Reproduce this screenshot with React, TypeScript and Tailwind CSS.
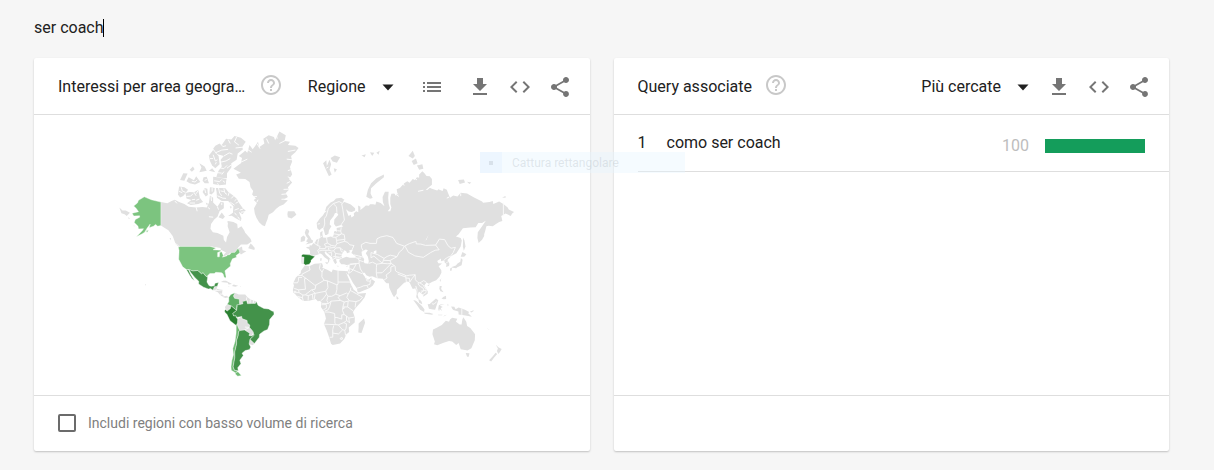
import React from "react";

/* ---------- Map ---------- */

// Coordinates are "lon,lat" pairs, drawn in a Mercator projection.
const SCALE_X = 1.068;
const SCALE_Y = 60.5;
const ORIGIN_X = 277.6;
const ORIGIN_Y = 191;

function toPath(shape: string, closed: boolean): string {
  const points = shape
    .trim()
    .split(/\s+/)
    .map((pair) => {
      const [lon, lat] = pair.split(",").map(Number);
      const merc = Math.log(Math.tan(Math.PI / 4 + (lat * Math.PI) / 360));
      return (ORIGIN_X + lon * SCALE_X).toFixed(1) + " " + (ORIGIN_Y - merc * SCALE_Y).toFixed(1);
    });
  return "M" + points.join("L") + (closed ? "Z" : "");
}

const LAND: string[] = [
  // Eurasia
  "-9.2,43 -8,43.8 -1.8,43.4 -1.2,44.7 -1.2,46 -2.5,47.4 -4.6,48 -4.5,48.6 -1.6,48.7 -1.7,49.7 0.2,49.6 1.6,50.8 3.5,51.4 4.7,53 7,53.5 8.6,53.9 8.2,56 8.3,57 10.6,57.7 10.3,56.3 10.9,54.2 14,54.1 18,54.8 19.8,54.5 21,55.5 21.3,57.4 22.7,57.6 24,57.1 23.7,59.2 28,59.6 30,60 28,60.6 23,59.9 21.3,61 21.5,63 25.3,65 24,65.8 22,65.6 21,64.5 17.5,62.5 17.2,60.8 18.8,60 16.5,58 16,56.2 14.2,55.5 12.9,55.5 11.2,59 10.5,59.3 7.5,58 5.5,59 5,61.5 8,63.5 11,64.8 12.5,66 14,68 18,69.5 21,70 23,70.8 28,71 31,70.4 29.5,69.8 33,69.4 37,68.8 41,67.5 41,66.6 38,66.1 35,66.3 32.5,67.1 34.8,64.5 37,65 37.5,63.9 40,64.6 39.8,65.6 42,66.4 44,66 43.8,68.5 46,68 46,66.8 49,67.8 51,68.5 54,68.4 55,68.9 58,68.9 60,68.7 61,69.8 65,69.3 68.5,68.2 67,69.6 66.8,71.2 69,72.8 72.5,72.8 72,71 72.5,69 73.7,67.5 71.5,66.4 74,66.4 75,67.8 74,69 74,71 75,72.2 78,72.3 79,71.6 80.5,72.4 80,73.5 83,73.8 87,75 90,75.5 92,75.1 95,76 97,75.8 99,76.4 101,76.3 101,77 104,77.7 106,77.3 108,76.7 111,76.6 113,76 113,74.6 110,74 107,73.2 109,73.3 111,73.9 113,73.6 118,73.1 119,73.5 123,73 124,73.7 127,73.3 128,72.5 130,71 133,71.7 137,71.4 140,72.5 146,72.3 150,71.5 153,71 160,69.8 161,69.4 167,69.6 170,70 170.5,69 176,69.8 180,69 184,67.8 185,67 190,66.1 188,65.4 187,64.5 182,65.5 180,65 178,64.5 179,62.4 176,62 173,61 170,60 166,60.2 164,60 163,57.8 162,56 162,55 160,53 156.7,51 155.6,54 156,57 160,60 163.5,62.5 160,61.5 156.5,61.5 154,59.5 149,59.4 142,59 138,56 135.5,54.7 140,54 141,52.5 140,49 136,44.5 132,43 130.7,42.3 127.5,39.8 129.4,37 129,35.2 126.3,34.5 126.6,37 125,37.8 124.6,39.7 121.5,38.8 121.5,40.8 118,39 119,37.3 122.5,37.2 119.3,35 121.8,32 121.9,30 120,26.5 117,23.6 113.5,22.2 110.2,20.5 108,21.6 105.8,19 109.2,13.5 109,11.5 105,8.7 105,10.3 102.5,12 100.8,13.4 99.5,10.5 100.5,7.3 103.3,4 104,1.4 101,2.8 100.3,6 98.3,8 98.7,12 97.6,16.5 95,15.8 94,17.5 92,21.5 90.5,22.5 87,21.3 85,19.5 82,16.6 80.2,15 80,11.5 77.5,8.1 76,10.5 73,17 72.7,20.8 70.5,20.8 69,22.3 67,24.8 61.5,25.2 57,26.9 54.5,26.6 51.5,27.8 50,30 48,30 48,29 50,26.8 51,24.8 51.5,25.9 51.8,24.1 54,24.2 56.2,26 56.7,24.3 59.7,22.5 57.7,19 55,17 52,15.6 45,12.8 43.4,12.8 42.6,16.5 39,21.2 35,28 34.9,29.5 34.5,28 32.6,29.8 32.3,31.2 34.3,31.3 35.8,34 36,36.5 33,36.1 30.6,36.6 28,36.7 26.3,38.5 26.3,40 29,41 33,42 36,41.5 41.5,41.5 41.5,42.5 37.5,44.7 39,47.2 35,46.2 36.5,45.3 33.5,44.5 32.7,45.8 31,46.6 28.7,44 28,42 29,41.2 26,40.7 23,40.4 24,38 22.5,36.6 21,38.5 19.4,41.8 15,44.5 13.6,45.5 12.4,45 13.6,43.5 16,41.9 18.4,40 17,40.5 16.5,38 15.7,38 15.6,40 12.3,41.7 10.3,43.5 8.8,44.4 5,43.3 3.1,43 3.2,42 -0.3,39.5 -0.7,37.7 -2,36.8 -5.5,36.1 -6.5,37 -9,37 -9.4,38.8",
  // Africa
  "-6,35.8 -2,35.1 3,36.9 10,37.3 11,35 10.2,34 15,32.3 19,30.3 20,32.5 25,31.6 32.3,31.3 32.6,29.8 35.5,24 37.3,20 39.5,15.3 43,12.5 43.3,11.5 51.3,12 50,8 47,4 41.5,-2 39,-6 40.7,-11 40.6,-15.5 35,-20 35.5,-24 32.8,-26 31,-29.8 27,-33.6 20,-34.8 18.4,-33.8 17,-29.5 14.5,-23 11.8,-17 13.7,-12 12.2,-6 9,-1 9.5,3.5 8,4.5 6,4.3 4,6.4 -2,4.8 -7.5,4.4 -13,8.5 -15,11 -17,12.5 -17.3,14.8 -16.3,19 -17,21 -14.5,26 -10,29.5 -9.7,31.5",
  // Canadian mainland
  "-141,69.6 -135,69.2 -131,70 -128,70.4 -124,69.6 -119,69 -115,68 -108,67.7 -102,67.9 -98,67.8 -96,69.5 -95,71.7 -92,71 -92,69.5 -88,68 -85,69.7 -82,69.5 -82,67.5 -86,66.5 -88,64.2 -91,63 -94,61 -94.6,58.8 -92.3,57 -88,56.6 -82.5,55.2 -82,52.8 -80,51.3 -79,54.5 -76.6,57 -78.5,60 -78,62.4 -73,62 -69.5,61 -69,58.9 -65.5,60 -63,58 -62,56.8 -57,53.5 -56,52 -60,50.2 -66,50.2 -70,47.2 -65,49 -64.5,46.5 -61,45.8 -66,43.7 -67.5,45.2 -69.2,47.4 -71.5,45 -75,45 -79,43.3 -83,42 -81.5,44 -80,45 -82.5,46 -85,46.8 -85,48 -89,48.5 -95,49 -123,49 -127.5,51 -130,55 -134,58 -137,59 -141,60.3",
  // Greenland
  "-73,78.2 -69,78.8 -66,79.2 -65,80.1 -68,80.4 -62,81.2 -60,80.9 -58,82 -55,81.4 -53,81.8 -50,82.4 -49,81.7 -44,82.2 -45,82.8 -40,83.2 -35,83 -34,82.6 -30,83.6 -24,83.2 -25,82.5 -20,82.4 -22,82 -15,81.9 -12,81.6 -15,81 -19,80.4 -18,79.5 -20,78.5 -18,77 -21,76 -18,75.2 -22,74 -21,73.3 -24,72.4 -22,71.2 -26,70.4 -22,70.2 -26,68.8 -30,68.2 -33,67.3 -36,66 -40,65 -41,63.3 -42.5,61.5 -43.5,60 -46,60.5 -49,61.8 -51.5,63.8 -53,65.5 -53.7,67.5 -51,69.3 -54,70.3 -52,70.8 -55.5,72 -54.5,73 -57,74 -58,75.3 -62,76 -68,76.1 -70.5,77 -66,77.4",
  // Central America
  "-92.2,14.6 -90.9,17.7 -88.3,18.3 -88.8,15.9 -83.3,15 -83.7,11 -81.5,9 -79.5,9.5 -77.3,8 -80.5,7.4 -83,8.4 -85.7,10.5 -87.6,12.9",
  // Venezuela and the Guianas
  "-71.5,12 -70,11.6 -68,10.6 -62,10.7 -60,8.3 -57,6 -51.7,4.2 -52.5,2.2 -56,2.2 -59.5,1.5 -60,5 -64,4 -64,2 -66.3,0.8 -67.4,2.8 -67.5,6.2 -72,7.2 -73,9.2",
  "-78.8,1.4 -75.3,0 -76,-2.8 -79,-5 -80.3,-3.4 -81,-1",
  "-69,-12.5 -65.3,-10 -65,-12 -60.2,-13.8 -60,-16 -57.7,-18 -58,-20 -55.8,-22.3 -54.5,-24 -55.8,-27.4 -58.5,-27 -57.7,-25.2 -62.6,-22.2 -67,-22.8 -68.5,-20 -69.5,-17.5 -69.3,-16",
  "-57.6,-30.2 -53.4,-33.7 -55,-35 -58.3,-34",
  // Australia, Tasmania, New Zealand
  "114,-22 113.5,-26 115.7,-32 115,-34.2 118,-35 124,-33 129,-31.7 132,-32 135.8,-34.8 138,-33.2 140,-38 144,-38.5 146.3,-39 150,-37.3 153.2,-31 153.5,-26 149,-20.5 146,-18.8 145.2,-15 142.5,-10.8 141.5,-13 140.8,-17.5 139,-17.4 135.5,-15 136.8,-12.2 132,-11.3 130,-13 129,-15 126,-14 122.3,-18 117,-20.7",
  "144.7,-40.8 148.2,-40.9 147.5,-43.4 146,-43.4",
  "172.8,-34.5 175.3,-36.5 178.4,-37.8 176.8,-40 175.2,-41.5 174,-39.3 174.8,-37.5",
  "172.7,-40.6 174.2,-41.5 171,-44.3 168.5,-46.6 166.6,-45.8 170,-43",
  // South-east Asian islands
  "95.5,5.6 98,4.8 103.5,0 106,-3.2 105.7,-5.8 102,-3.8 98.8,1",
  "105.3,-6.6 110.8,-6.5 114.4,-7.8 113,-8.5 106.5,-7.5",
  "109,1.5 111,1.6 114,4.6 116.8,7 119,5.2 117.6,1 116,-3.8 114,-3.6 110.2,-2.8",
  "119.5,0.5 121,1.2 125,1.5 120.3,0.2 123.2,-1 121.3,-2 122.5,-4.8 120.3,-3 119.7,-5.5 118.9,-3",
  "131,-0.8 134,-0.9 135.2,-3.2 138,-1.6 144,-3.8 147.8,-6 147,-7 150.5,-10.4 147,-9.5 143,-9 138,-8.3 137.8,-5.3 133,-4 132,-2.8",
  "148.5,-5.6 152,-4.2 152.2,-5 150,-6.2",
  "120.3,18.4 122.2,18.4 121.6,15.8 124,12.8 121,13.6 119.9,16",
  "122,7 124,8.6 126.2,9.4 126.3,6.4 124,6.2",
  "118.5,-8.4 123,-8.4 122.5,-9 119,-9",
  "123.5,-10.3 127,-8.5 125,-9",
  "127.5,2 128.5,1 128,-0.6",
  "120.2,23 121.8,25.2 121,22.2",
  "108.7,19.2 111,20 110,18.4",
  "79.8,9.5 81.8,7.3 81,6 79.9,6.8",
  // Japan and Sakhalin
  "130,33.3 131.8,33.8 131.4,31.4 130.2,31.3",
  "131,34.3 135.5,35.6 137,37.2 139.6,38.6 140.2,41.2 141.8,40 140.8,35.8 136.8,34.2 135.7,33.6 132.5,34",
  "140,42 141.6,45.4 145.3,43.8 143.3,42.1 140.8,42",
  "142.2,54.2 143.4,52.5 144.5,49 142.9,46.2 142,49",
  // Madagascar
  "49.3,-12 50.4,-15.8 47,-25 44,-24.5 44.3,-20 44.3,-16.5",
  // British Isles and Iceland
  "-5,58.6 -3.2,58.5 -2,57.5 -3,56 -1.5,54.8 0.2,53 1.7,52.5 1.2,51.2 -5.4,50.1 -3,51.5 -5,52 -3.2,53.6 -5,55 -6.2,56.8",
  "-7.5,55.3 -5.6,54.5 -6.3,52.2 -10,51.7 -9.8,54.2",
  "-22.5,65.2 -22,66.4 -16,66.4 -14,65 -18.5,63.5 -22,64",
  "8.3,41 9.7,41 9.5,39.2 8.4,39",
  "12.6,38 15.6,38.2 15,36.7",
  "23.6,35.5 26.3,35.2 24.8,34.9",
  "32.4,35 34.5,35.6 33.5,34.6",
  // Arctic islands of Europe and Asia
  "11,79.2 14,79.7 14.5,78.7 17,79.8 18.5,79 17,78 19,77 16.5,76.6 14,77.8",
  "18,80.1 22,80.5 27,80.2 24,79.3 20,79.5",
  "21,78.3 24,78.1 22,77.4",
  "47,80.5 51,80.7 50,80.2",
  "55,81 59,80.9 57,80.4",
  "61,80.9 64,81.2 63,80.6",
  "51.5,71.3 55,70.7 57.5,70.9 55.5,72.3 56,73.7 61,75 68,76.4 68,77 61,76.2 56,75 53,73.3",
  "91,80.4 95,81.2 97,80.4 95,80",
  "94,79.6 98,80 99.5,79.2 96,78.9",
  "99,78.8 104,79 105,78.2 101,78",
  "137.5,75.8 143,75.9 144,75.2 139,74.8",
  "146,75.4 150,75.2 148,74.8",
  "178.7,71.1 182,71.5 182,71",
  // Canadian archipelago
  "-125,72 -124,74.2 -119,74 -115.5,73.3 -120,71.5 -123,71.1",
  "-117,70.8 -118,72.4 -114,72.7 -110,72.6 -106,73.3 -104.5,71 -101.5,69.6 -106,69 -113,68.6 -116.5,69.2 -112.5,70.3",
  "-102,72.7 -100,73.8 -97.5,73.6 -97,71.8 -99,71.4",
  "-95.5,72.2 -95,74 -90.5,73.8 -91,72.8 -93.5,72",
  "-89.5,73.8 -85,73.8 -80.5,73.7 -78,72.8 -74,71.8 -70,70.8 -67.5,69.2 -64,67.4 -61.5,66.6 -64.5,65.2 -68,66.2 -65.5,63.6 -66,62.4 -71,63.6 -74.5,64.6 -78,64.5 -73.5,65.8 -73,68.2 -78,70 -84,70 -88.5,71 -88.8,72.6",
  "-87,64 -84,65.9 -81,64.2 -83,63.2",
  "-79.5,76 -80,75.4 -80,74.7 -86,74.5 -92,74.8 -92,76.5 -88,76.4",
  "-96,75 -98,76.5 -101,76.4 -102,75.6 -100,75",
  "-104,75.3 -109,74.7 -114,75 -117,75.5 -115,76.4 -110,75.7 -108,76.6",
  "-123,75.8 -119,75.6 -116,77.2 -120,77.3",
  "-114,78 -111,78.6 -109.5,78.1 -112,77.6",
  "-105,77.5 -103,78.4 -105,79.2 -100,78.6 -98,77.8",
  "-96,77.8 -93,78.3 -90,77.5",
  "-95,79.6 -96,80.5 -92,81.3 -87,80.4 -86,79 -90,78.3 -93,78.8",
  "-92,81.5 -90,81.9 -86,82.2 -84,82 -80,82.8 -75,82.7 -72,83.1 -66,82.9 -61.5,82.4 -65,81.7 -64,81.4 -69,80.8 -70,79.8 -75,79.2 -75,78.4 -79,77.3 -79,76.2 -85,76.3 -89,76.5 -87,77.8 -84,78.6 -85,79.8 -82,80.4 -88,80.7",
  "-59.2,47.7 -57,50.8 -55.5,50 -53,48 -53.5,46.7",
  "-128,50.8 -124,49.3 -123.6,48.4",
  "-133,54 -131.7,54 -131.5,52.6",
  "-99,69.5 -96.5,69 -98,68.6",
  "-76.5,68.2 -74.5,68 -75.5,67.3",
  "-79,62.3 -77,61.9 -78.5,61.6",
  // Caribbean
  "-84.8,22 -82.5,23 -80,23 -74.3,20.2 -77.5,19.9 -78.5,21.4",
  "-74.4,18.4 -72.8,19.9 -68.5,18.7 -71.3,17.8",
  "-78.2,18.3 -76.4,18 -77.5,17.8",
  "-67,18.3 -65.7,18.3 -66.5,17.9",
  // Pacific
  "-172,64 -170,63.6 -171,63.3",
  "-167,60.2 -165.5,60.2 -166,59.8",
  "-180,67.8 -177,66.6 -174,66.6 -170,65.8 -173,64.5 -175,65.2 -178,65.6",
  "-156,20.2 -155,19.5 -155.8,19",
  "164,-20.3 167,-22.2 166,-22",
];

const SEAS: string[] = [
  "47,45.5 51,47 53,46.5 51,44.5 53,42 53.8,39 53.5,37 50,37.3 49,38.5 49.5,40.3 47.5,43",
  "58.5,45.8 61,46.5 61,44.5 58.5,44",
  "104,51.5 107,52.5 109.7,55.5 108,53",
];

// Fjords and sounds that cut into the Arctic coasts.
const INLETS: string[] = [
  "-90,80.9 -84,81.3 -78,81.4", "-86,82.3 -83,81.8 -80,81.9", "-78,82.7 -76,82.2", "-70,83 -72,82.4 -68,82", "-82,80.4 -77,80.9 -74,80.7",
  "-85,79.4 -80,79.6 -76,80", "-87,78.4 -82,78.2 -79,78.8", "-84,77 -82,77.6", "-75,78.9 -79,78.3", "-65,81.7 -71,81.6", "-88,77.4 -84,77.3",
  "-92,80.6 -90,79.6 -88,79.8", "-95,80 -92,80", "-90,79 -89,79.4", "-91,75.6 -86,75.4 -84,75.9", "-88,75 -87,74.6", "-83,75.6 -81,75.2",
  "-87,73.8 -86,72.4 -84,71.6", "-82,73.6 -81,72.4 -79,72", "-85,73 -82,72.8", "-77,72.6 -78,71.6", "-73,71.5 -75,70.8", "-70,70.6 -72,70", "-68,69.8 -71,69.2",
  "-88,71.6 -83,70.9 -80,70.8", "-76,69.6 -72,68.6", "-72,66.8 -68,67.4", "-64,67.2 -67,66.8", "-70,64.8 -72,65.8", "-67,63 -69,64.2", "-66,66 -62,66.2",
  "-117,71.4 -113,71.5 -111,72.2", "-110,72.6 -108,71.6", "-106,73.2 -108,72.2", "-112,70.4 -109,70.5", "-105,70.6 -108,70.2", "-114,69.3 -109,69.3",
  "-122,74 -121,73 -118,72.6", "-124,72.9 -121,72.5", "-100,73.6 -99,72.4", "-93,73.8 -93,72.8", "-98,75.9 -100,75.7", "-112,75.5 -109,75.3 -107,75.8",
  "-108,67.8 -107,66.4", "-97,67.8 -95,67.2", "-88,68 -87,67", "-94,71.4 -93.5,70", "-84,69.4 -84,68.6", "-92,64 -96,64.2", "-128,70 -126,69.2",
  "-66,79.4 -60,79.9", "-60,81.4 -56,81", "-51,82.2 -48,81.5", "-42,82.8 -40,82.2", "-33,83.4 -32,82.8", "-24,82.6 -30,82.2", "-15,81.3 -22,81.1",
  "-18,79.8 -23,79.9", "-19,78 -22,77.8", "-19,76.2 -22,76.5", "-20,75.4 -23,75", "-20,73.5 -26,73.4", "-22,72.2 -28,72", "-22,70.6 -28,70.5", "-51,69.6 -50,70.4", "-54,71.3 -51,71.4",
  "78,72.3 82,71.4", "86,75 87,74.4", "97,76.2 99,75.8", "105,73.2 100,72.9", "140,72.3 140,71.5", "129,71.2 127,70.9", "79,73 81,72",
  "14,78.3 16,78.5", "6,61 8,61.2", "12,66 14,66.4",
];

const BORDERS: string[] = [
  // Europe
  "-1.8,43.4 3.2,42.4", "2.5,51 6,49.5 8.2,49 7.5,47.5 6,46.3 7.5,44", "6,49.5 6.2,51.5 7,53.3",
  "7.5,47.5 13,47.6 13.8,48.7 12.2,50.3 15,51 14.2,54", "6.8,46 10,46.5 13.7,46.5 13.6,45.5",
  "15,51 18.8,49.6 22.6,49.1 24,50.7 23.6,52.6 23,54.3 19.8,54.4", "13.8,48.7 17,48.8 18.8,49.6",
  "17,48 22,48.3 22.8,49", "16.5,46.5 19,46 21,46.2 22.8,48 26.8,48.2 28.2,45.5 29.6,45.3",
  "16.5,46.5 16,48.2", "13.7,46.5 16.5,46.5", "15.8,44.8 19,45 19,43.3 18.5,42.5", "21,46.2 22.6,44.4 28.5,43.8",
  "22.6,44.4 22.5,42.3 26.3,41.8 28,42", "20,42 22.5,42.3 23,41.2 20.8,40.6 20,39.7", "23,41.2 26.3,41.5",
  "24,50.7 31,52 34,51.5 36,50 40,49.5 38.3,47.2", "23.6,52.6 31.5,53.2 30.8,55.8 28.2,56.2 23,54.3",
  "31,52 31.5,53.2", "21,56.2 26.5,55.7 28.2,56.2 27.5,57.6 28,59.5", "24.3,57.8 27.5,57.6",
  "27.8,60.6 31,62.8 29.5,67 28.5,69 30.8,69.8", "24,65.8 23.6,68 20.5,69.1 26,69.8 28.9,69.2",
  "11.3,59 12.5,61 12.3,63.5 14,64.5 16,67.5 20.5,69.1", "9,54.8 10,54.8", "26.8,48.2 30,46.4",
  // Caucasus and Central Asia
  "40,43.4 44,42.7 48.4,41.8", "41.5,41.5 43.5,41.1 46.5,41.2", "43.5,41.1 44.8,39.6 48.8,38.5", "36,36.8 42.3,37.2 44.8,37.2 44.8,39.6",
  "48.5,46.2 47,48.2 46.8,50 51,51.5 55,50.8 61,50.8 61.5,53.5 65,54.5 70.8,55.2 76.5,54.2 80,50.8 87.2,49.1",
  "87.2,49.1 85.5,47 82.5,45.3 80.2,42.2", "55.9,45 55.9,41.4 58.6,42.6 66.5,37.4", "55.9,45 62,43.6 68.2,41 71,42.3 74,43.2 80.2,42.2 73.6,39.4",
  "53.9,37.3 57.3,38.2 61.2,36.6 61,34 60.9,29.8 61.7,25.2", "61.2,36.6 66.5,37.4 71.2,37 74.8,37.2 70.5,33.5 66.3,29.9 60.9,29.8",
  "66.5,37.4 68.2,41", "73.6,39.4 67.8,39.5", "73.6,39.4 74.8,37.2 78.5,35.2 78.8,31.5 81,30.2",
  "68.2,23.7 71,25.5 70,28 74.5,31 74.5,34.5 77.5,35.5", "81,30.2 88,27.9 88.8,27.2 91.8,27.8 97.3,28.2 97.5,24",
  "81,28.8 88.1,26.4 88,28", "88.5,26.5 89,22", "88.5,25.5 92,25.2 92.2,22", "92.2,22 94.5,25 97.3,28.2",
  "97.5,24 100,21.5 101.8,21.2 105.3,23.3 108,21.6", "97.8,18.5 99,15 98.7,10.5", "100,21 100.5,19.5 102.2,18 104.8,16.5 105.5,14.4 102.5,12",
  "101.8,21.2 104.5,19.6 107.6,15.2 107.5,12.4 104.5,10.5", "102.5,13.8 107.5,14.5", "100.2,6.5 102,6.2",
  // Mongolia, China, Korea
  "87.2,49.1 92,50.7 98,52 98.3,50.5 102.5,50.4 107,49.6 116.5,49.8 119.8,46.8 116,46.5 111.8,45 105,41.7 97,42.7 90.9,45.2 87.8,49.1",
  "116.5,49.8 120,53.3 125,53 128,49.5 131,47.8 135,48.4 133,45 131,43 130.6,42.4", "130.6,42.4 128,41.9 124.5,40", "126.5,37.8 128.4,38.6",
  "113,2 115,1.5 117.5,4.1", "141,-2.6 141,-9.1",
  // Near East
  "35.8,33.3 39,32.3 42.3,37.2", "39,32.3 42,31.1 47.7,29.1", "35,29.4 38,31 39,32.3", "44.8,37.2 46,33 48,30", "35.7,33.5 35.5,31.2 34.9,29.5",
  "42.8,16.5 46,17.3 49,18.6 52,19 55,20 55.2,22.7 52,23 51.5,24.3", "52,19 53.2,16.7", "55.2,22.7 56.3,24.9",
  "35.9,36.2 42,37", "34.3,31.3 34.9,29.5",
  // North and West Africa
  "-2,35.1 -1.2,32.2 -8.7,28.7 -8.7,27.6 -13,27.6", "8.3,36.8 7.6,33.3 10,30.3 11.5,33", "10,30.3 9.8,26.5 12,23.5 4.2,19.2 3.2,19.2 -4.8,25 -8.7,27.6",
  "25,31.6 25,22 36.5,22", "12,23.5 15,23 24,19.5 25,20 25,22", "-4.8,25 -6.5,24.9 -5.5,15.5 -12,15 -16,16.3", "-8.7,26 -12,26 -12,23.4 -13,21.3 -17,21.3",
  "4.2,19.2 3.5,15.5 0.3,15 3.6,11.8 13.5,13.7 15.5,17 15,23", "0.3,15 -5,11 -5.5,10.3 -8,10.2 -11.5,12.4 -12,15", "-16.5,12.4 -11.5,12.4", "-16.7,13.5 -14,13.5",
  "-5.5,10.3 -2.8,9.6 0.9,11 3.6,11.8", "-2.8,9.6 -3,5", "0.9,11 1.5,6.2", "2.7,6.4 3.6,11.8", "-8,10.2 -8.3,7.5 -7.5,4.5", "-13.2,9 -10.5,8.3 -11.4,6.8", "-10.5,8.3 -8.3,7.5",
  "13.5,13.7 14.2,11 11,6.5 8.7,4.7", "14.2,11 15.5,9 14.5,5 16.1,2.2 9.8,2.3", "15.5,9 19,9 22.9,11 24,15.5 24,19.5", "22.9,11 27,9.5 33,12 34.5,10.7",
  "27,9.5 25,7.8 27.4,5.1 18.5,4.4 16.1,2.2", "36.5,22 38.5,18", "37,17 36.5,14.4 34.5,10.7 33.2,8 35.8,4.7 41.8,4 45,5 48,8 43,10.8 42,11.5 36.5,14.4",
  "27.4,5.1 30.8,3.6 35.8,4.7", "41.8,4 41,-1.5",
  // Central and Southern Africa
  "18.5,4.4 17,-1 15.5,-4 12.5,-5", "9.5,1 14,1.2 14,-2.3 11.2,-3.8", "30.8,3.6 29.6,-1 29.2,-4.5 30.8,-8.3 28.5,-8.5", "29.6,-1 34,-1 39.2,-4.7", "34,-1 34.5,4.2",
  "29.2,-2.8 30.8,-2.4 30.5,-1", "12.5,-5.9 16.7,-6 21.8,-7.3 22,-11 24,-11 28.5,-12.5 28.5,-8.5", "22,-11 22,-16.2 23.3,-17.6 12,-17.2", "23.3,-17.6 25.3,-17.8 30.3,-15.7 33,-14 33,-9.5 30.8,-8.3",
  "33,-9.5 35,-11.6 40.4,-10.6", "35,-11.6 35.8,-16 34.5,-14.5 33,-14", "30.3,-15.7 33,-16.8 32.5,-21.3 31.3,-22.4 29.3,-22.2 25.3,-17.8", "29.3,-22.2 25.5,-25.7 20,-25 20,-28.5 17,-28.6",
  "20,-25 20,-22 21,-18.3", "31.3,-22.4 32,-26.8 32.8,-26.8", "27,-29.5 28.8,-28.7 29.3,-30 27.6,-30.4 27,-29.5",
  // Americas
  "-60.5,8 -61,5 -60,5", "-57.2,5.9 -57.5,2.2", "-54,5.7 -54.5,2.4", "-92,14.6 -89.3,14.2 -83.3,15", "-89,15.9 -89.3,14.2", "-85.7,11.1 -83.7,11", "-83,8.4 -82.6,9.6",
  "-62.3,-19.8 -58,-20 -62.6,-22.2",
  // Date line
  "180,69.5 180,64.5",
];

const REGIONS: { name: string; fill: string; shapes: string[] }[] = [
  {
    name: "Stati Uniti",
    fill: "#7cc47f",
    shapes: [
      "-123,49 -95,49 -89.5,48 -92,46.8 -84.8,46.6 -84.8,45.9 -87.8,45 -87.8,42 -86.2,42 -86,45 -84,45.5 -82.5,43 -83.2,41.8 -79,42.8 -79,43.3 -76.3,43.6 -75,45 -71.5,45.1 -69.2,47.4 -67.8,47 -67,44.8 -70.5,43 -70,41.7 -74,40.6 -76,37 -75.7,35.2 -81,31.5 -80,26.8 -80.5,25.2 -81.8,26.3 -82.8,29 -84.2,30 -89.5,30.2 -91,29.2 -95,29.3 -97.3,27.5 -97.2,26 -99.5,27.6 -101.4,29.8 -103,29 -104.8,30.3 -106.5,31.8 -111,31.3 -114.8,32.5 -117.1,32.5 -120.6,34.6 -124.3,40.3 -124,46.3 -124.7,48.4",
      "-141,60.3 -144,60 -146,60.8 -148,60 -152,59.3 -151,61 -154,59 -156,57.2 -158,56.3 -164,54.6 -158.5,57.8 -157.3,58.8 -162,58.7 -162.5,60 -166,61.7 -165,63 -161,64 -161,64.6 -166.5,64.5 -168,65.6 -162,66.2 -164,67.4 -166.5,68.3 -163,69.3 -162,70.2 -156.6,71.3 -150,70.4 -141,69.6",
      "-155,57.8 -152.5,58 -154,56.9",
    ],
  },
  {
    name: "Messico",
    fill: "#43924a",
    shapes: [
      "-114.8,32.5 -111,31.3 -106.5,31.8 -104.8,30.3 -103,29 -101.4,29.8 -99.5,27.6 -97.2,26 -97.8,22 -96,19 -94,18.2 -91,18.6 -90.3,21 -87,21.5 -88,18.3 -90.9,17.7 -92.2,14.6 -94.5,16.2 -96.5,15.7 -101,17.4 -105.6,20.2 -105.5,22.7 -109.3,26 -112.8,30",
      "-117.1,32.5 -115.2,32.4 -112.8,28 -109.5,23.2 -112,25 -114,27.8",
    ],
  },
  {
    name: "Colombia",
    fill: "#5fae64",
    shapes: ["-77.3,8 -75.5,10.7 -71.5,12.3 -73,9.2 -72,7.2 -67.5,6.2 -67.3,2.2 -66.9,1.2 -69.8,0.6 -70,-4.2 -72.5,-2.4 -75.3,0 -78.8,1.4 -77.3,4"],
  },
  {
    name: "Cile",
    fill: "#6fba73",
    shapes: [
      "-70.4,-18.3 -69.5,-17.5 -68.5,-20 -67,-22.8 -68.3,-24 -68.5,-27 -70,-31 -70,-34 -71.8,-40 -71.7,-44 -73.3,-50 -72,-52 -69,-52.4 -71,-53.6 -75,-52 -75.3,-50 -74.5,-46 -73,-42 -73.6,-37.5 -71.5,-32 -70.5,-25",
      "-70,-53 -68.5,-53 -65.5,-55 -69,-55.3 -71.5,-54",
    ],
  },
  {
    name: "Brasile",
    fill: "#43924a",
    shapes: ["-70,-4.2 -69.5,0 -69.8,1 -66.9,1.2 -64,2 -64.5,4 -60.7,5 -59.8,2 -56,2.2 -52.5,2.2 -51.5,4.2 -50,0.5 -48,-0.7 -44.5,-2.5 -40,-3 -37,-4.8 -35.3,-5.5 -34.9,-8 -39,-13 -39.2,-17.5 -41,-22 -44.5,-23.2 -48.5,-26 -48.8,-28.5 -53.4,-33.7 -57.6,-30.2 -53.8,-27 -54.5,-24 -55.8,-22.3 -58,-20 -57.7,-18 -60,-16 -60.2,-13.8 -65,-12 -65.3,-10 -70.5,-11 -70.5,-9.5 -72.8,-9.5 -73.8,-7.3"],
  },
  {
    name: "Argentina",
    fill: "#43924a",
    shapes: ["-67,-22.8 -62.6,-22.2 -57.7,-25.2 -58.5,-27 -55.8,-27.4 -53.8,-26 -53.8,-27 -57.6,-30.2 -58.3,-34 -56.8,-36.3 -58,-38.3 -62,-39 -65,-41 -63.8,-42.5 -67,-45.8 -66,-48 -69,-50.5 -68.4,-52.3 -72,-52 -73.3,-50 -71.7,-44 -71.8,-40 -70,-34 -70,-31 -68.5,-27 -68.3,-24"],
  },
  {
    name: "Perù",
    fill: "#2a8031",
    shapes: ["-80.3,-3.4 -79,-5 -76,-2.8 -75.3,0 -72.5,-2.4 -70,-4.2 -73.8,-7.3 -72.8,-9.5 -70.5,-9.5 -70.5,-11 -69,-12.5 -69.3,-16 -70.4,-18.3 -76.2,-14 -79,-8.2 -81.2,-6 -81.3,-4.5"],
  },
  {
    name: "Spagna",
    fill: "#2a8031",
    shapes: ["-9.2,43 -8,43.9 -1.8,43.4 3.3,42.3 -0.3,39.5 -0.4,38.5 -2,36.6 -5.5,36 -7.3,37.2 -6.8,41.9 -8.9,41.9"],
  },
];

function WorldMap() {
  return (
    <svg
      viewBox="0 0 556 280"
      className="block h-auto w-full"
      role="img"
      aria-label="Interessi per area geografica"
      strokeLinejoin="round"
    >
      <g fill="#e0e0e0">
        {LAND.map((shape, i) => (
          <path key={i} d={toPath(shape, true)} />
        ))}
      </g>
      <g fill="#ffffff">
        {SEAS.map((shape, i) => (
          <path key={i} d={toPath(shape, true)} />
        ))}
      </g>
      <g fill="none" stroke="#ffffff" strokeWidth="0.9">
        {INLETS.map((shape, i) => (
          <path key={i} d={toPath(shape, false)} />
        ))}
      </g>
      <g fill="none" stroke="#fafafa" strokeWidth="0.9">
        {BORDERS.map((shape, i) => (
          <path key={i} d={toPath(shape, false)} />
        ))}
      </g>
      <g stroke="#ffffff" strokeWidth="0.4">
        {REGIONS.map((region) => (
          <path key={region.name} fill={region.fill} d={region.shapes.map((s) => toPath(s, true)).join("")} />
        ))}
      </g>
      {/* Portugal */}
      <path fill="#ececec" d={toPath("-8.9,41.9 -6.8,41.9 -7.3,37.2 -9,37 -9.4,38.8", true)} />
    </svg>
  );
}

/* ---------- Controls ---------- */

const ICONS = {
  list: "M3 13h2v-2H3v2zm0 4h2v-2H3v2zm0-8h2V7H3v2zm4 4h14v-2H7v2zm0 4h14v-2H7v2zM7 7v2h14V7H7z",
  download: "M19 9h-4V3H9v6H5l7 7 7-7zM5 18v2h14v-2H5z",
  code: "M9.4 16.6L4.8 12l4.6-4.6L8 6l-6 6 6 6 1.4-1.4zm5.2 0l4.6-4.6-4.6-4.6L16 6l6 6-6 6-1.4-1.4z",
  share:
    "M18 16.08c-.76 0-1.44.3-1.96.77L8.91 12.7c.05-.23.09-.46.09-.7s-.04-.47-.09-.7l7.05-4.11c.54.5 1.25.81 2.04.81 1.66 0 3-1.34 3-3s-1.34-3-3-3-3 1.34-3 3c0 .24.04.47.09.7L8.04 9.81C7.5 9.31 6.79 9 6 9c-1.66 0-3 1.34-3 3s1.34 3 3 3c.79 0 1.5-.31 2.04-.81l7.12 4.16c-.05.21-.08.43-.08.65 0 1.61 1.31 2.92 2.92 2.92 1.61 0 2.92-1.31 2.92-2.92s-1.31-2.92-2.92-2.92z",
  help: "M11 18h2v-2h-2v2zm1-16C6.48 2 2 6.48 2 12s4.48 10 10 10 10-4.48 10-10S17.52 2 12 2zm0 18c-4.41 0-8-3.59-8-8s3.59-8 8-8 8 3.59 8 8-3.59 8-8 8zm0-14c-2.21 0-4 1.79-4 4h2c0-1.1.9-2 2-2s2 .9 2 2c0 2-3 1.75-3 5h2c0-2.25 3-2.5 3-5 0-2.21-1.79-4-4-4z",
  arrow: "M6.5 9.5l5.5 6 5.5-6z",
};

type IconName = keyof typeof ICONS;

function Icon({ name }: { name: IconName }) {
  return (
    <svg viewBox="0 0 24 24" className="block size-6" fill="currentColor" aria-hidden="true">
      <path d={ICONS[name]} />
    </svg>
  );
}

function IconButton({ name, label }: { name: IconName; label: string }) {
  return (
    <button type="button" aria-label={label} className="flex size-10 shrink-0 items-center justify-center text-[#757575]">
      <Icon name={name} />
    </button>
  );
}

function HelpButton() {
  return (
    <button type="button" aria-label="Guida" className="shrink-0 pb-1 text-[#c8c8c8]">
      <Icon name="help" />
    </button>
  );
}

function Dropdown({ label, value }: { label: string; value: string }) {
  return (
    <div className="relative flex shrink-0 items-center">
      <select
        aria-label={label}
        defaultValue={value}
        className="appearance-none bg-transparent pr-[34px] text-base leading-6 [field-sizing:content]"
      >
        <option>{value}</option>
      </select>
      <span className="pointer-events-none absolute right-0 text-[#212121]">
        <Icon name="arrow" />
      </span>
    </div>
  );
}

function Card({ children }: { children: React.ReactNode }) {
  return (
    <section className="flex min-w-0 flex-col rounded-xs bg-white shadow-[0_1px_2px_rgba(0,0,0,0.22)]">{children}</section>
  );
}

function CardHeader({ children }: { children: React.ReactNode }) {
  return <header className="flex h-[57px] items-center border-b border-[#dedede] pt-0.5 pr-2.5 pl-6">{children}</header>;
}

/* ---------- Page ---------- */

export default function App() {
  return (
    <main className="relative min-h-screen bg-[#f6f6f6] pr-[45px] pb-[19px] pl-[34px] font-[Roboto,sans-serif] text-base text-[#212121]">
      <div className="flex items-center pt-[18px] pb-5">
        <input
          aria-label="Termine di ricerca"
          defaultValue="ser coach"
          className="h-5 bg-transparent leading-5 outline-none [field-sizing:content]"
        />
        <span className="-ml-px h-[18px] w-px bg-black" />
      </div>

      <div className="grid grid-cols-2 gap-6">
        <Card>
          <CardHeader>
            <h2 className="truncate">Interessi per area geogra…</h2>
            <div className="ml-3.5 flex">
              <HelpButton />
            </div>
            <div className="ml-auto flex items-center">
              <Dropdown label="Area" value="Regione" />
              <div className="mr-2 ml-3">
                <IconButton name="list" label="Elenco" />
              </div>
              <IconButton name="download" label="Scarica" />
              <IconButton name="code" label="Incorpora" />
              <IconButton name="share" label="Condividi" />
            </div>
          </CardHeader>
          <WorldMap />
          <footer className="flex h-14 items-center border-t border-[#dedede] px-6">
            <label className="flex items-center gap-3 text-sm text-[#808080]">
              <input type="checkbox" className="size-[18px] appearance-none rounded-xs border-2 border-[#6b6b6b] bg-white" />
              Includi regioni con basso volume di ricerca
            </label>
          </footer>
        </Card>

        <Card>
          <CardHeader>
            <h2 className="truncate">Query associate</h2>
            <div className="ml-3 flex">
              <HelpButton />
            </div>
            <div className="ml-auto flex items-center gap-1">
              <Dropdown label="Ordina" value="Più cercate" />
              <div className="flex">
                <IconButton name="download" label="Scarica" />
                <IconButton name="code" label="Incorpora" />
                <IconButton name="share" label="Condividi" />
              </div>
            </div>
          </CardHeader>
          <ol className="flex-1 pl-6">
            <li className="flex h-[57px] items-start border-b border-[#dedede] pt-4 pr-6">
              <span className="w-[29px]">1</span>
              <a href="#como-ser-coach">como ser coach</a>
              <span className="mt-[3px] ml-auto flex items-center gap-4 text-[#bdbdbd]">
                100
                <span className="h-3.5 w-[100px] bg-[#149d5b]" />
              </span>
            </li>
          </ol>
          <footer className="h-14 border-t border-[#dedede]" />
        </Card>
      </div>

      <div className="pointer-events-none absolute top-[152px] left-[480px] flex h-[21px] w-[205px] items-center bg-[#e6f4ff]/40 text-xs text-[#9aa5ad]/25">
        <span className="flex h-full w-[22px] items-center justify-center bg-[#e0eeff]/35">
          <span className="size-1 bg-[#9aa5ad]/25" />
        </span>
        <span className="pl-2.5">Cattura rettangolare</span>
      </div>
    </main>
  );
}
